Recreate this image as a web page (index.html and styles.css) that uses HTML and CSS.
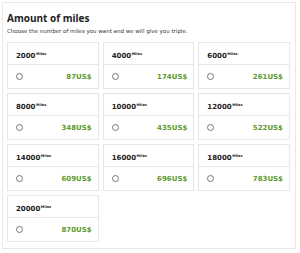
FILE: index.html
```html
<!DOCTYPE html>
<html lang="en">
<head>
    <meta charset="UTF-8">
    <meta name="viewport" content="width=device-width, initial-scale=1.0">
    <title>Amount of miles</title>
    <link rel="stylesheet" href="styles.css">
</head>
<body>
    <div class="panel">
        <h1>Amount of miles</h1>
        <p class="intro">Choose the number of miles you want and we will give you triple.</p>

        <div class="options">
            <label class="option">
                <div class="option-head">2000<sup>Miles</sup></div>
                <div class="option-foot"><input type="radio" name="miles"><span class="price">87US$</span></div>
            </label>
            <label class="option">
                <div class="option-head">4000<sup>Miles</sup></div>
                <div class="option-foot"><input type="radio" name="miles"><span class="price">174US$</span></div>
            </label>
            <label class="option">
                <div class="option-head">6000<sup>Miles</sup></div>
                <div class="option-foot"><input type="radio" name="miles"><span class="price">261US$</span></div>
            </label>
            <label class="option">
                <div class="option-head">8000<sup>Miles</sup></div>
                <div class="option-foot"><input type="radio" name="miles"><span class="price">348US$</span></div>
            </label>
            <label class="option">
                <div class="option-head">10000<sup>Miles</sup></div>
                <div class="option-foot"><input type="radio" name="miles"><span class="price">435US$</span></div>
            </label>
            <label class="option">
                <div class="option-head">12000<sup>Miles</sup></div>
                <div class="option-foot"><input type="radio" name="miles"><span class="price">522US$</span></div>
            </label>
            <label class="option">
                <div class="option-head">14000<sup>Miles</sup></div>
                <div class="option-foot"><input type="radio" name="miles"><span class="price">609US$</span></div>
            </label>
            <label class="option">
                <div class="option-head">16000<sup>Miles</sup></div>
                <div class="option-foot"><input type="radio" name="miles"><span class="price">696US$</span></div>
            </label>
            <label class="option">
                <div class="option-head">18000<sup>Miles</sup></div>
                <div class="option-foot"><input type="radio" name="miles"><span class="price">783US$</span></div>
            </label>
            <label class="option">
                <div class="option-head">20000<sup>Miles</sup></div>
                <div class="option-foot"><input type="radio" name="miles"><span class="price">870US$</span></div>
            </label>
        </div>
    </div>
</body>
</html>
```

FILE: styles.css
```css
body {
    font-family: 'DejaVu Sans', 'Noto Sans', sans-serif;
    color: #222;
    margin: 2px;
    background-color: #ffffff;
}
.panel {
    width: 283px;
    border: 1px solid #e8e8e8;
    padding: 6px 5px 6px 4px;
    box-shadow: 0 1px 2px rgba(0, 0, 0, 0.04);
}
h1 {
    font-family: 'Open Sans', 'DejaVu Sans', sans-serif;
    font-size: 10px;
    font-weight: 700;
    margin: 3px 0 2px;
    line-height: 13px;
}
.intro {
    font-size: 5.5px;
    margin: 0 0 6px;
    line-height: 9px;
    color: #333;
}
.options {
    display: grid;
    grid-template-columns: repeat(3, 1fr);
    gap: 4px;
}
.option {
    display: block;
    border: 1px solid #e6e6e6;
    cursor: pointer;
}
.option-head {
    height: 21px;
    line-height: 22px;
    padding-left: 8px;
    font-size: 7px;
    font-weight: bold;
    border-bottom: 1px solid #e6e6e6;
}
.option-head sup {
    font-size: 3.5px;
    vertical-align: 3px;
    margin-left: 0.5px;
}
.option-foot {
    height: 23px;
    display: flex;
    align-items: center;
    justify-content: space-between;
    padding: 0 6px 0 8px;
}
.option-foot input {
    margin: 0;
    width: 7px;
    height: 7px;
}
.price {
    font-size: 7px;
    font-weight: bold;
    color: #5e9a2c;
}
```
